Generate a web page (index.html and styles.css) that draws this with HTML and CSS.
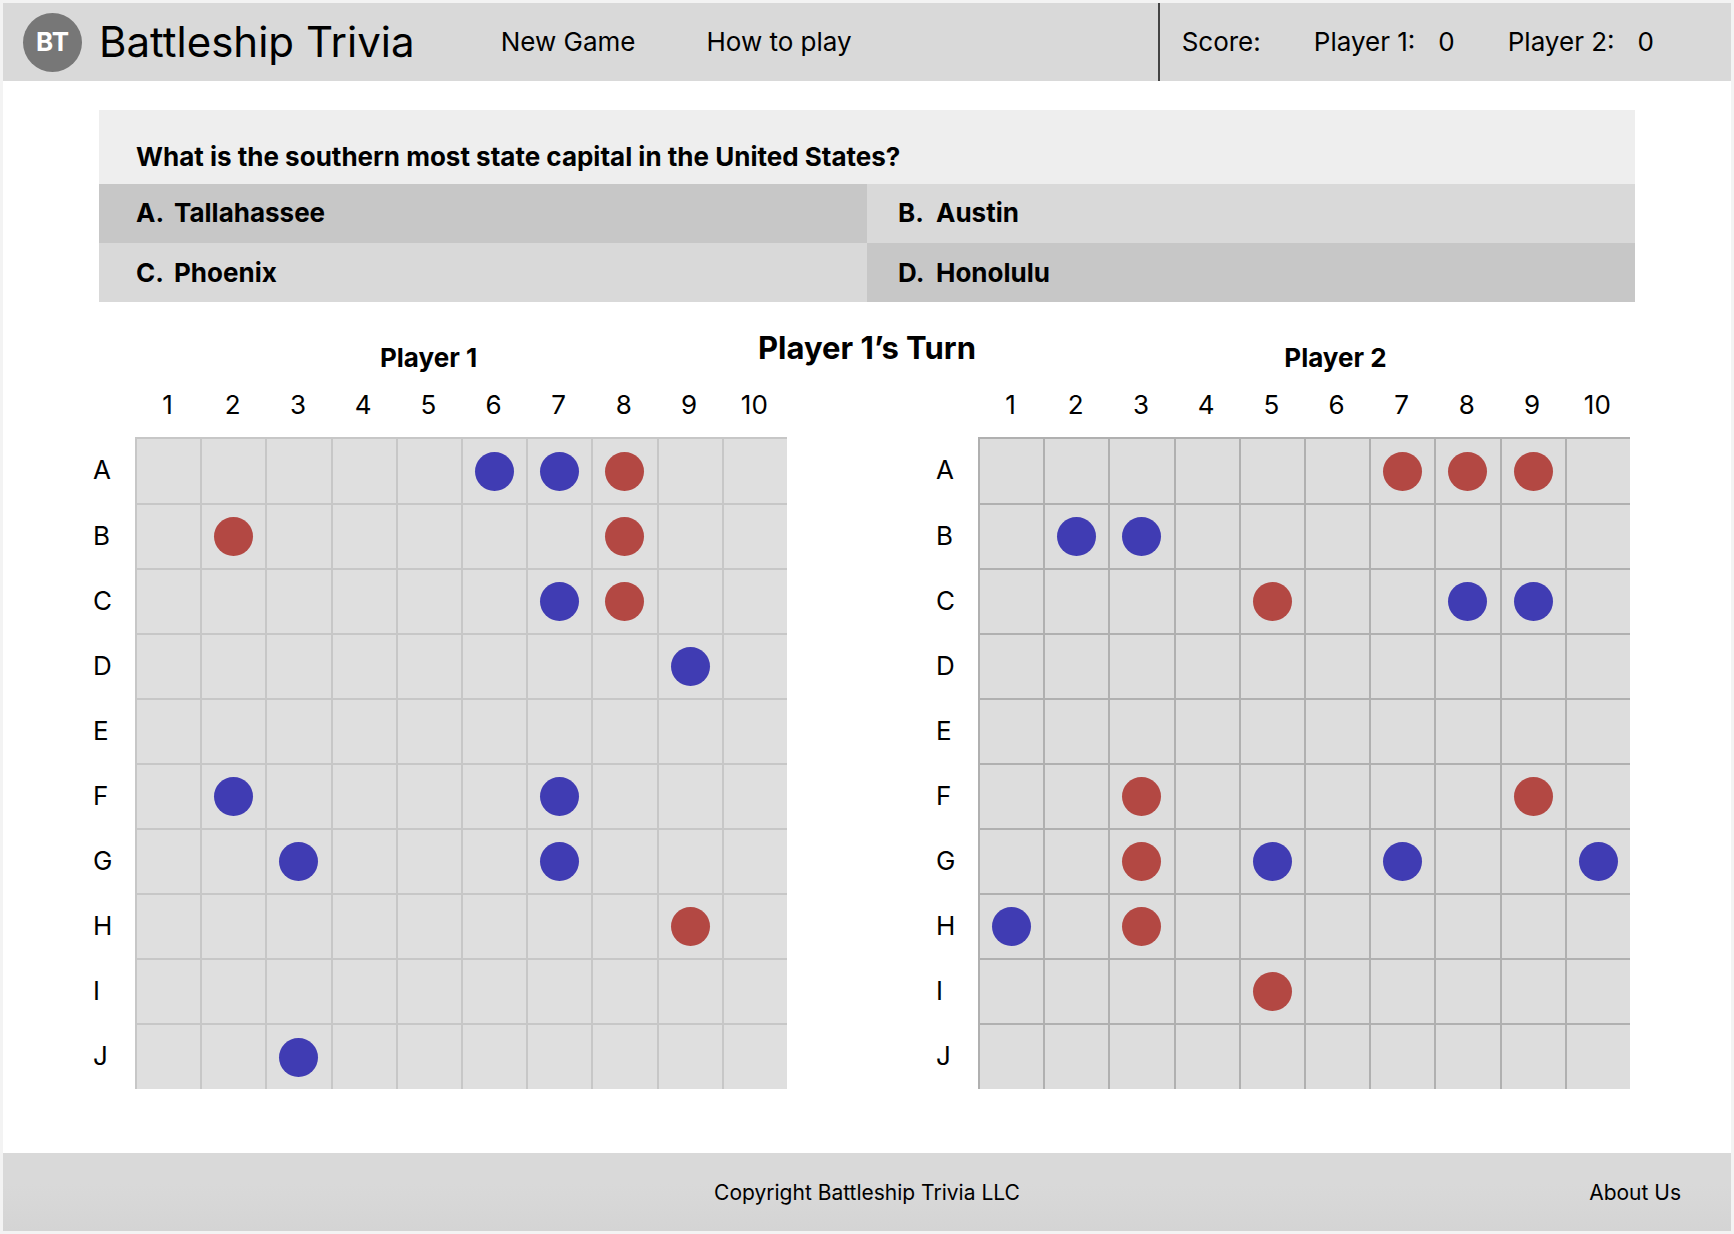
FILE: index.html
```html
<!DOCTYPE html>
<html lang="en">
<head>
<meta charset="utf-8">
<title>Battleship Trivia</title>
<link rel="stylesheet" href="styles.css">
</head>
<body>
<div class="page">
  <header class="topbar">
    <div class="brand">
      <span class="logo">BT</span>
      <h1 class="brand-name">Battleship Trivia</h1>
    </div>
    <nav class="nav">
      <a href="#new">New Game</a>
      <a href="#how">How to play</a>
    </nav>
    <div class="score">
      <span class="score-title">Score:</span>
      <span class="score-item"><span>Player 1:</span><span>0</span></span>
      <span class="score-item"><span>Player 2:</span><span>0</span></span>
    </div>
  </header>

  <main>
    <section class="trivia">
      <h2 class="question">What is the southern most state capital in the United States?</h2>
      <div class="answers">
        <button class="answer dark" type="button"><span class="letter">A.</span>Tallahassee</button>
        <button class="answer" type="button"><span class="letter">B.</span>Austin</button>
        <button class="answer" type="button"><span class="letter">C.</span>Phoenix</button>
        <button class="answer dark" type="button"><span class="letter">D.</span>Honolulu</button>
      </div>
    </section>

    <div class="status">
      <h3 class="player" id="p1">Player 1</h3>
      <h2 class="turn">Player 1’s Turn</h2>
      <h3 class="player player-two" id="p2">Player 2</h3>
    </div>

    <div class="boards">
      <table class="board" aria-labelledby="p1">
        <thead><tr><td class="corner"></td><th>1</th><th>2</th><th>3</th><th>4</th><th>5</th><th>6</th><th>7</th><th>8</th><th>9</th><th>10</th></tr></thead>
        <tbody>
          <tr><th>A</th><td></td><td></td><td></td><td></td><td></td><td><i class="peg miss"></i></td><td><i class="peg miss"></i></td><td><i class="peg hit"></i></td><td></td><td></td></tr>
          <tr><th>B</th><td></td><td><i class="peg hit"></i></td><td></td><td></td><td></td><td></td><td></td><td><i class="peg hit"></i></td><td></td><td></td></tr>
          <tr><th>C</th><td></td><td></td><td></td><td></td><td></td><td></td><td><i class="peg miss"></i></td><td><i class="peg hit"></i></td><td></td><td></td></tr>
          <tr><th>D</th><td></td><td></td><td></td><td></td><td></td><td></td><td></td><td></td><td><i class="peg miss"></i></td><td></td></tr>
          <tr><th>E</th><td></td><td></td><td></td><td></td><td></td><td></td><td></td><td></td><td></td><td></td></tr>
          <tr><th>F</th><td></td><td><i class="peg miss"></i></td><td></td><td></td><td></td><td></td><td><i class="peg miss"></i></td><td></td><td></td><td></td></tr>
          <tr><th>G</th><td></td><td></td><td><i class="peg miss"></i></td><td></td><td></td><td></td><td><i class="peg miss"></i></td><td></td><td></td><td></td></tr>
          <tr><th>H</th><td></td><td></td><td></td><td></td><td></td><td></td><td></td><td></td><td><i class="peg hit"></i></td><td></td></tr>
          <tr><th>I</th><td></td><td></td><td></td><td></td><td></td><td></td><td></td><td></td><td></td><td></td></tr>
          <tr><th>J</th><td></td><td></td><td><i class="peg miss"></i></td><td></td><td></td><td></td><td></td><td></td><td></td><td></td></tr>
        </tbody>
      </table>

      <table class="board board-two" aria-labelledby="p2">
        <thead><tr><td class="corner"></td><th>1</th><th>2</th><th>3</th><th>4</th><th>5</th><th>6</th><th>7</th><th>8</th><th>9</th><th>10</th></tr></thead>
        <tbody>
          <tr><th>A</th><td></td><td></td><td></td><td></td><td></td><td></td><td><i class="peg hit"></i></td><td><i class="peg hit"></i></td><td><i class="peg hit"></i></td><td></td></tr>
          <tr><th>B</th><td></td><td><i class="peg miss"></i></td><td><i class="peg miss"></i></td><td></td><td></td><td></td><td></td><td></td><td></td><td></td></tr>
          <tr><th>C</th><td></td><td></td><td></td><td></td><td><i class="peg hit"></i></td><td></td><td></td><td><i class="peg miss"></i></td><td><i class="peg miss"></i></td><td></td></tr>
          <tr><th>D</th><td></td><td></td><td></td><td></td><td></td><td></td><td></td><td></td><td></td><td></td></tr>
          <tr><th>E</th><td></td><td></td><td></td><td></td><td></td><td></td><td></td><td></td><td></td><td></td></tr>
          <tr><th>F</th><td></td><td></td><td><i class="peg hit"></i></td><td></td><td></td><td></td><td></td><td></td><td><i class="peg hit"></i></td><td></td></tr>
          <tr><th>G</th><td></td><td></td><td><i class="peg hit"></i></td><td></td><td><i class="peg miss"></i></td><td></td><td><i class="peg miss"></i></td><td></td><td></td><td><i class="peg miss"></i></td></tr>
          <tr><th>H</th><td><i class="peg miss"></i></td><td></td><td><i class="peg hit"></i></td><td></td><td></td><td></td><td></td><td></td><td></td><td></td></tr>
          <tr><th>I</th><td></td><td></td><td></td><td></td><td><i class="peg hit"></i></td><td></td><td></td><td></td><td></td><td></td></tr>
          <tr><th>J</th><td></td><td></td><td></td><td></td><td></td><td></td><td></td><td></td><td></td><td></td></tr>
        </tbody>
      </table>
    </div>
  </main>

  <footer class="footer">
    <span class="copyright">Copyright Battleship Trivia LLC</span>
    <a class="about" href="#about">About Us</a>
  </footer>
</div>
</body>
</html>
```
FILE: styles.css
```css
* {
  box-sizing: border-box;
}

body {
  margin: 0;
  background: #fff;
  color: #000;
  font-family: Inter, "Liberation Sans", sans-serif;
  font-size: 26px;
  line-height: 32px;
}

h1, h2, h3 {
  margin: 0;
}

a {
  color: inherit;
  text-decoration: none;
}

.page {
  display: flex;
  flex-direction: column;
  min-height: 100vh;
  border: 3px solid #f3f3f3;
}

/* Top bar */
.topbar {
  display: flex;
  align-items: stretch;
  height: 78px;
  background: #d9d9d9;
  white-space: nowrap;
}

.brand {
  display: flex;
  align-items: center;
  gap: 17px;
  padding-left: 20px;
}

.logo {
  display: flex;
  align-items: center;
  justify-content: center;
  width: 59px;
  height: 59px;
  border-radius: 50%;
  background: #777;
  color: #fff;
  font-weight: 700;
}

.brand-name {
  font-size: 42px;
  font-weight: 400;
  line-height: 52px;
}

.nav {
  display: flex;
  align-items: center;
  gap: 71px;
  margin-left: 86px;
}

.score {
  display: flex;
  align-items: center;
  margin-left: auto;
  padding: 0 77px 0 22px;
  border-left: 2px solid #444;
  gap: 53px;
}

.score-item {
  display: flex;
  gap: 23px;
}

/* Question and answers */
.trivia {
  margin: 29px 96px 0;
}

.question {
  padding: 31px 37px 11px;
  background: #eee;
  font-size: 26px;
  font-weight: 700;
}

.answers {
  display: grid;
  grid-template-columns: 1fr 1fr;
}

.answer {
  display: flex;
  align-items: center;
  height: 59px;
  padding: 0 37px 2px;
  border: 0;
  background: #d9d9d9;
  color: inherit;
  font: inherit;
  font-weight: 700;
  text-align: left;
}

.answer:nth-child(even) {
  padding-left: 31px;
}

.answer:nth-child(n + 3) {
  padding-bottom: 0;
}

.dark {
  background: #c7c7c7;
}

.letter {
  width: 38px;
}

/* Turn and player headings */
.status {
  display: grid;
  grid-template-columns: 1fr auto 1fr;
  margin: 26px 96px 0;
  text-align: center;
}

.turn {
  font-size: 31px;
  font-weight: 700;
  line-height: 40px;
}

.player {
  padding-top: 14px;
  font-size: 26px;
  font-weight: 700;
}

.player-two {
  padding-left: 60px;
}

/* Boards */
.boards {
  display: grid;
  grid-template-columns: 1fr 1fr;
  gap: 149px;
  padding: 15px 101px 64px 90px;
}

.board {
  --cell: #dfdfdf;
  --line: #c7c7c7;
  width: 100%;
  table-layout: fixed;
  border-spacing: 0;
}

.board-two {
  --cell: #ddd;
  --line: #b0b0b0;
}

.board th,
.board td {
  padding: 0;
  font-weight: 400;
}

.board .corner {
  width: 42px;
}

.board thead th {
  padding-bottom: 16px;
}

.board tbody th {
  text-align: left;
}

.board tbody td {
  height: 65px;
  border-top: 2px solid var(--line);
  border-left: 2px solid var(--line);
  background: var(--cell);
}

.board tbody tr:first-child td,
.board tbody tr:last-child td {
  height: 66px;
}

.peg {
  display: block;
  width: 39px;
  height: 39px;
  margin: 0 auto;
  border-radius: 50%;
}

.hit {
  background: #b34843;
}

.miss {
  background: #403cb3;
}

/* Footer */
.footer {
  display: grid;
  grid-template-columns: 1fr auto 1fr;
  align-items: center;
  height: 78px;
  margin-top: auto;
  padding: 1px 50px 0;
  background: linear-gradient(#d9d9d9 40%, #d4d4d4);
  font-size: 21px;
}

.copyright {
  grid-column: 2;
}

.about {
  justify-self: end;
}
```
